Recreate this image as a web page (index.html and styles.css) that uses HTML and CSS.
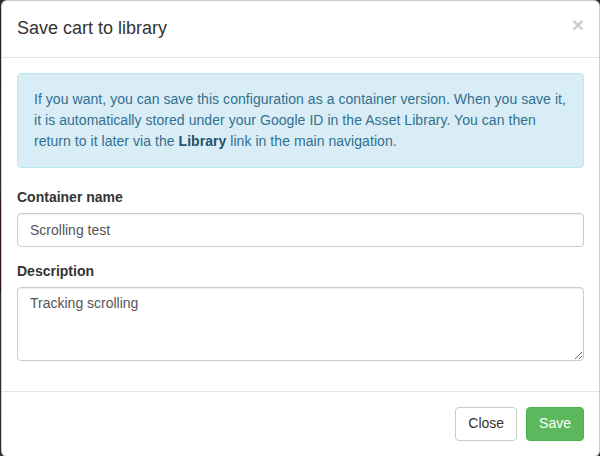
FILE: index.html
```html
<!DOCTYPE html>
<html lang="en">
<head>
<meta charset="utf-8">
<title>Save cart to library</title>
<link rel="stylesheet" href="styles.css">
</head>
<body>
<div class="backdrop">
  <div class="modal-dialog">
    <div class="modal-content">
      <div class="modal-header">
        <h4 class="modal-title">Save cart to library</h4>
        <button type="button" class="close" aria-label="Close">&times;</button>
      </div>
      <div class="modal-body">
        <div class="alert">
          If you want, you can save this configuration as a container version. When you save it, it is automatically stored under your Google ID in the Asset Library. You can then return to it later via the <b class="alert-link">Library</b> link in the main navigation.
        </div>
        <div class="form-group">
          <label class="form-label">Container name</label>
          <input class="form-control" type="text" value="Scrolling test">
        </div>
        <div class="form-group">
          <label class="form-label">Description</label>
          <textarea class="form-control textarea" rows="3">Tracking scrolling</textarea>
        </div>
      </div>
      <div class="modal-footer">
        <button type="button" class="btn btn-default">Close</button>
        <button type="button" class="btn btn-success">Save</button>
      </div>
    </div>
  </div>
</div>
</body>
</html>
```
FILE: styles.css
```css
* { box-sizing: border-box; }
html, body {
  margin: 0;
  padding: 0;
  height: 100%;
}
body {
  font-family: "Liberation Sans", Arial, Helvetica, sans-serif;
  font-size: 14px;
  line-height: 1.42857;
  color: #333;
  background: linear-gradient(to bottom, #2e2e2e 0, #3c3c3c 195px, #4a1e1c 200px, #3d1a19 290px, #404040 295px, #3a3a3a 100%);
  overflow: hidden;
}
.backdrop {
  padding: 0 0 0 1px;
}
.modal-dialog {
  width: 599px;
}
.modal-content {
  background: #fff;
  border: 1px solid rgba(0, 0, 0, 0.2);
  border-radius: 6px;
  box-shadow: 0 5px 15px rgba(0, 0, 0, 0.5);
}
.modal-header {
  display: flex;
  align-items: flex-start;
  justify-content: space-between;
  padding: 15px;
  border-bottom: 1px solid #e5e5e5;
}
.modal-title {
  margin: 0;
  font-size: 18px;
  font-weight: 500;
  line-height: 1.42857;
  color: #333;
}
.close {
  margin-top: -2px;
  padding: 0;
  border: 0;
  background: transparent;
  font-family: inherit;
  font-size: 21px;
  font-weight: bold;
  line-height: 1;
  color: #000;
  opacity: 0.2;
  text-shadow: 0 1px 0 #fff;
  cursor: pointer;
}
.modal-body {
  padding: 15px;
}
.alert {
  padding: 15px 15px 15px 16px;
  margin-bottom: 20px;
  border: 1px solid #bce8f1;
  border-radius: 4px;
  background: #d9edf7;
  color: #31708f;
  line-height: 21px;
  letter-spacing: 0.05px;
}
.alert-link {
  color: #245269;
  font-weight: bold;
}
.form-group {
  margin-bottom: 15px;
}
.form-label {
  display: block;
  margin-bottom: 5px;
  font-weight: bold;
}
.form-control {
  display: block;
  width: 100%;
  height: 34px;
  padding: 6px 12px;
  font-family: inherit;
  font-size: 14px;
  line-height: 1.42857;
  color: #555;
  background: #fff;
  border: 1px solid #ccc;
  border-radius: 4px;
  box-shadow: inset 0 1px 1px rgba(0, 0, 0, 0.075);
  margin: 0;
}
.textarea {
  height: auto;
  resize: vertical;
}
.modal-footer {
  display: flex;
  justify-content: flex-end;
  gap: 9px;
  padding: 15px;
  border-top: 1px solid #e5e5e5;
}
.btn {
  display: inline-block;
  padding: 6px 12px;
  margin: 0;
  font-family: inherit;
  font-size: 14px;
  line-height: 1.42857;
  border: 1px solid transparent;
  border-radius: 4px;
  cursor: pointer;
}
.btn-default {
  color: #333;
  background: #fff;
  border-color: #ccc;
}
.btn-success {
  color: #fff;
  background: #5cb85c;
  border-color: #4cae4c;
}
```
